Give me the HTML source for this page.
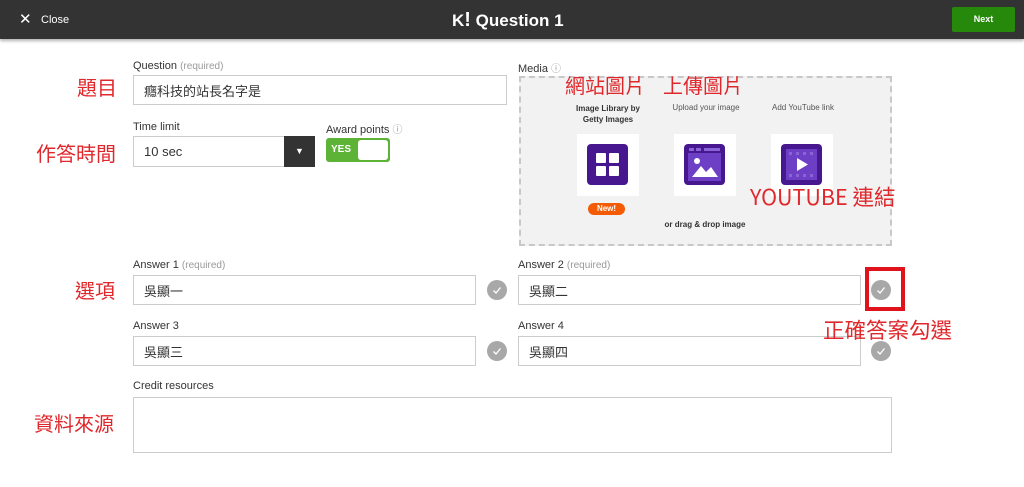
<!DOCTYPE html>
<html><head><meta charset="utf-8"><style>
*{box-sizing:border-box;margin:0;padding:0}
body{width:1024px;height:487px;background:#fff;position:relative;overflow:hidden;font-family:"Liberation Sans","Noto Sans CJK TC",sans-serif;color:#333}
.a{position:absolute}
.hdr{left:0;top:0;width:1024px;height:39px;background:#333;box-shadow:0 2px 3px rgba(0,0,0,.3)}
.lbl{font-size:11px;color:#333;white-space:nowrap}
.lbl span{color:#999;font-size:10px}
.inp{border:1px solid #ccc;background:#fff;font-size:13px;color:#333;padding-left:10px;display:flex;align-items:center}
.red{color:#e0282c;font-size:20px;font-family:"Noto Sans CJK TC",sans-serif;white-space:nowrap;line-height:1;font-weight:400}
.chk{width:20px;height:20px;border-radius:50%;background:#a8a8a8}
.tile{width:62px;height:62px;background:#fff}
.ic{position:absolute;left:10px;top:10px;width:41px;height:41px;background:#46178f;border-radius:4px}
.small{font-size:8px;color:#333;text-align:center;white-space:nowrap}
</style></head><body>
<div class="a hdr"></div>
<div class="a" style="left:19px;top:12px;color:#fff;font-size:15px;line-height:15px">✕</div>
<div class="a" style="left:41px;top:14px;color:#fff;font-size:11px">Close</div>
<div class="a" style="left:452px;top:9px;color:#fff;font-size:17px;font-weight:bold;line-height:22px">K<span style="font-size:20px">!</span> Question 1</div>
<div class="a" style="left:952px;top:7px;width:63px;height:25px;background:#26890c;border-radius:2px;color:#fff;font-size:9px;font-weight:bold;text-align:center;line-height:25px">Next</div>

<div class="a lbl" style="left:133px;top:60px">Question <span>(required)</span></div>
<div class="a inp" style="left:133px;top:75px;width:374px;height:30px">癮科技的站長名字是</div>
<div class="a red" style="left:77px;top:77px">題目</div>

<div class="a lbl" style="left:133px;top:121px">Time limit</div>
<div class="a inp" style="left:133px;top:136px;width:182px;height:31px">10 sec</div>
<div class="a" style="left:284px;top:136px;width:31px;height:31px;background:#333;color:#fff;font-size:9px;text-align:center;line-height:31px">▼</div>
<div class="a red" style="left:36px;top:143px">作答時間</div>
<div class="a lbl" style="left:326px;top:121px">Award points <span>ⓘ</span></div>
<div class="a" style="left:326px;top:138px;width:64px;height:24px;background:#5cb336;border-radius:3px"></div>
<div class="a" style="left:331px;top:144px;color:#fff;font-size:10px;font-weight:bold">YES</div>
<div class="a" style="left:358px;top:140px;width:30px;height:20px;background:#fff;border-radius:3px"></div>

<div class="a lbl" style="left:518px;top:60px">Media <span>ⓘ</span></div>
<div class="a" style="left:519px;top:76px;width:373px;height:170px;background:#f2f2f2;border:2px dashed #c8c8c8"></div>
<div class="a small" style="left:562px;top:103px;width:92px;font-weight:bold;line-height:11px">Image Library by<br>Getty Images</div>
<div class="a small" style="left:660px;top:103px;width:92px;color:#555">Upload your image</div>
<div class="a small" style="left:757px;top:103px;width:92px;color:#555">Add YouTube link</div>
<div class="a tile" style="left:577px;top:134px"><div class="ic"><svg width="41" height="41"><rect x="9" y="9" width="10" height="10" rx="1" fill="#fff"/><rect x="22" y="9" width="10" height="10" rx="1" fill="#fff"/><rect x="9" y="22" width="10" height="10" rx="1" fill="#fff"/><rect x="22" y="22" width="10" height="10" rx="1" fill="#fff"/></svg></div></div>
<div class="a tile" style="left:674px;top:134px"><div class="ic"><svg width="41" height="41"><rect x="4" y="9" width="33" height="28" fill="#6c3fc4"/><rect x="5" y="4" width="5" height="3" fill="#8a63d6"/><rect x="12" y="4" width="5" height="3" fill="#8a63d6"/><rect x="20" y="4" width="16" height="3" fill="#8a63d6"/><circle cx="13" cy="17" r="3" fill="#fff"/><path d="M8 33 L17 22 L22 28 L27 23 L34 33Z" fill="#fff"/></svg></div></div>
<div class="a tile" style="left:771px;top:134px"><div class="ic"><svg width="41" height="41"><rect x="5" y="5" width="31" height="31" fill="#6c3fc4"/><g fill="#8a63d6"><rect x="8" y="8" width="3" height="3"/><rect x="15" y="8" width="3" height="3"/><rect x="22" y="8" width="3" height="3"/><rect x="29" y="8" width="3" height="3"/><rect x="8" y="30" width="3" height="3"/><rect x="15" y="30" width="3" height="3"/><rect x="22" y="30" width="3" height="3"/><rect x="29" y="30" width="3" height="3"/></g><path d="M16 14 L27 20.5 L16 27Z" fill="#fff"/></svg></div></div>
<div class="a" style="left:588px;top:203px;width:37px;height:12px;background:#f35b04;border-radius:6px;color:#fff;font-size:8px;font-weight:bold;text-align:center;line-height:12px">New!</div>
<div class="a small" style="left:650px;top:220px;width:110px;font-weight:bold">or drag &amp; drop image</div>
<div class="a red" style="left:565px;top:75px">網站圖片</div>
<div class="a red" style="left:663px;top:75px">上傳圖片</div>
<div class="a red" style="left:750px;top:186px;font-size:21.5px">YOUTUBE 連結</div>

<div class="a lbl" style="left:133px;top:259px">Answer 1 <span>(required)</span></div>
<div class="a inp" style="left:133px;top:275px;width:343px;height:30px">吳顯一</div>
<div class="a chk" style="left:487px;top:280px"><svg width="20" height="20"><path d="M6.5 10.5 L9 13 L13.5 7.5" stroke="#fff" stroke-width="1.3" fill="none"/></svg></div>
<div class="a lbl" style="left:518px;top:259px">Answer 2 <span>(required)</span></div>
<div class="a inp" style="left:518px;top:275px;width:343px;height:30px">吳顯二</div>
<div class="a chk" style="left:871px;top:280px"><svg width="20" height="20"><path d="M6.5 10.5 L9 13 L13.5 7.5" stroke="#fff" stroke-width="1.3" fill="none"/></svg></div>
<div class="a" style="left:865px;top:267px;width:40px;height:44px;border:4px solid #e0121b"></div>
<div class="a red" style="left:75px;top:280px">選項</div>

<div class="a lbl" style="left:133px;top:320px">Answer 3</div>
<div class="a inp" style="left:133px;top:336px;width:343px;height:30px">吳顯三</div>
<div class="a chk" style="left:487px;top:341px"><svg width="20" height="20"><path d="M6.5 10.5 L9 13 L13.5 7.5" stroke="#fff" stroke-width="1.3" fill="none"/></svg></div>
<div class="a lbl" style="left:518px;top:320px">Answer 4</div>
<div class="a inp" style="left:518px;top:336px;width:343px;height:30px">吳顯四</div>
<div class="a chk" style="left:871px;top:341px"><svg width="20" height="20"><path d="M6.5 10.5 L9 13 L13.5 7.5" stroke="#fff" stroke-width="1.3" fill="none"/></svg></div>
<div class="a red" style="left:823px;top:319px;font-size:21.5px">正確答案勾選</div>

<div class="a lbl" style="left:133px;top:380px">Credit resources</div>
<div class="a inp" style="left:133px;top:397px;width:759px;height:56px"></div>
<div class="a red" style="left:34px;top:413px">資料來源</div>
</body></html>
